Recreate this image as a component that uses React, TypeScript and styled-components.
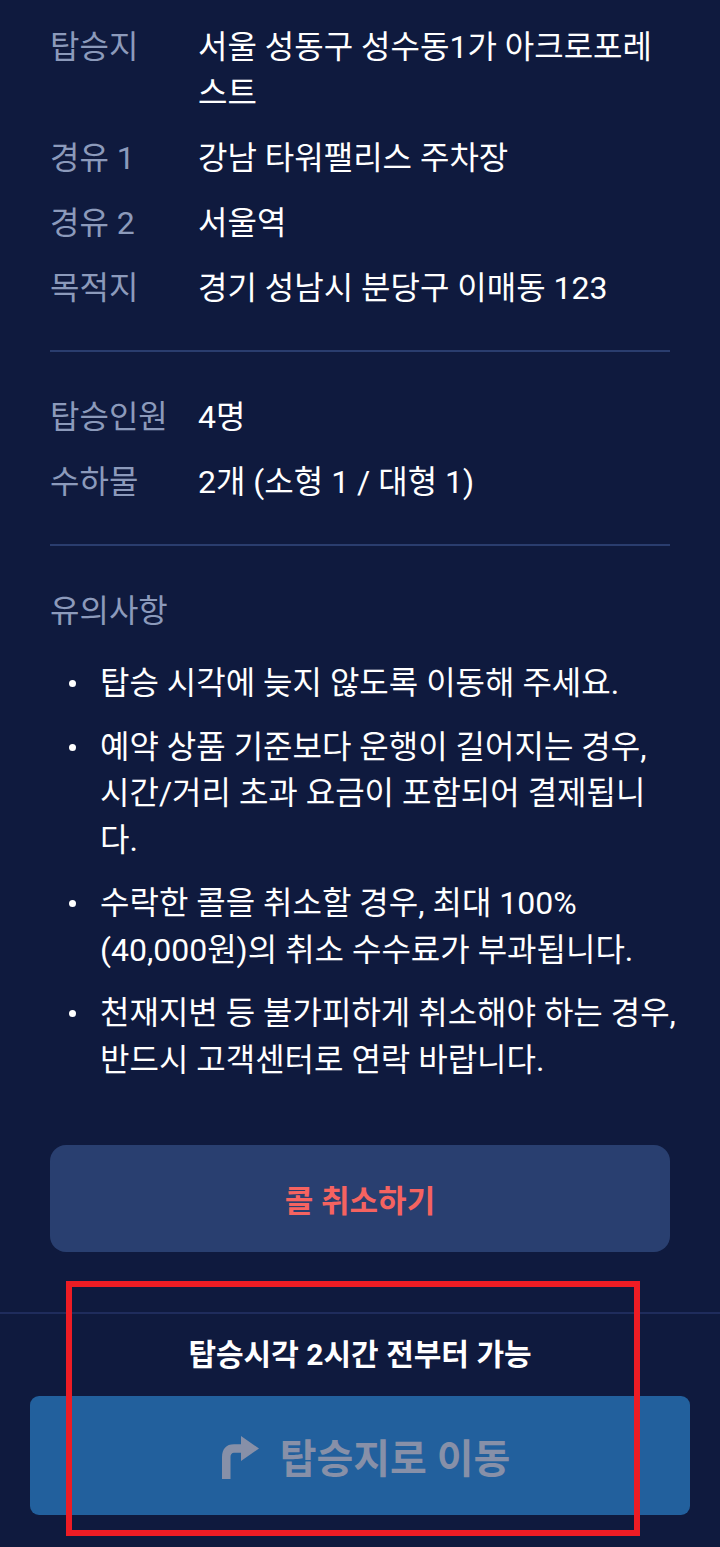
import React from "react"
import styled, { createGlobalStyle } from "styled-components"

const GlobalStyle = createGlobalStyle`
  html, body {
    margin: 0;
    padding: 0;
    background: #0f1a3e;
  }
  body {
    font-family: "Roboto", "Noto Sans CJK KR", sans-serif;
  }
  * { box-sizing: border-box; }
`

interface InfoItem {
  label: string
  value: string
}

const routeInfo: InfoItem[] = [
  { label: "탑승지", value: "서울 성동구 성수동1가 아크로포레스트" },
  { label: "경유 1", value: "강남 타워팰리스 주차장" },
  { label: "경유 2", value: "서울역" },
  { label: "목적지", value: "경기 성남시 분당구 이매동 123" },
]

const rideInfo: InfoItem[] = [
  { label: "탑승인원", value: "4명" },
  { label: "수하물", value: "2개 (소형 1 / 대형 1)" },
]

const notices = [
  "탑승 시각에 늦지 않도록 이동해 주세요.",
  "예약 상품 기준보다 운행이 길어지는 경우, 시간/거리 초과 요금이 포함되어 결제됩니다.",
  "수락한 콜을 취소할 경우, 최대 100% (40,000원)의 취소 수수료가 부과됩니다.",
  "천재지변 등 불가피하게 취소해야 하는 경우, 반드시 고객센터로 연락 바랍니다.",
]

export default function App() {
  return (
    <>
      <GlobalStyle />
      <Page>
        <Content>
          <InfoList>
            {routeInfo.map((item) => (
              <InfoRow key={item.label}>
                <Label>{item.label}</Label>
                <Value>{item.value}</Value>
              </InfoRow>
            ))}
          </InfoList>
          <Divider />
          <InfoList>
            {rideInfo.map((item) => (
              <InfoRow key={item.label}>
                <Label>{item.label}</Label>
                <Value>{item.value}</Value>
              </InfoRow>
            ))}
          </InfoList>
          <Divider />
          <NoticeTitle>유의사항</NoticeTitle>
          <NoticeList>
            {notices.map((n) => (
              <NoticeItem key={n}>{n}</NoticeItem>
            ))}
          </NoticeList>
          <CancelButton>콜 취소하기</CancelButton>
        </Content>
        <Footer>
          <FooterNote>탑승시각 2시간 전부터 가능</FooterNote>
          <GoButton disabled>
            <TurnIcon viewBox="0 0 37 44">
              <path d="M0 44 V22 C0 14 4 9.25 12 9.25 H19 V1 L37 13.5 L19 26 V17.75 H12 C9.8 17.75 8.5 19.5 8.5 22 V44 Z" />
            </TurnIcon>
            탑승지로 이동
          </GoButton>
          <Highlight />
        </Footer>
      </Page>
    </>
  )
}

const Page = styled.div`
  width: 720px;
  min-height: 1547px;
  background: #0f1a3e;
  display: flex;
  flex-direction: column;
`

const Content = styled.div`
  padding: 24px 50px 0;
  display: flex;
  flex-direction: column;
`

const InfoList = styled.div`
  display: flex;
  flex-direction: column;
  gap: 19px;
`

const InfoRow = styled.div`
  display: flex;
  font-size: 32px;
  line-height: 46px;
`

const Label = styled.div`
  width: 148px;
  flex-shrink: 0;
  color: #8c9abb;
`

const Value = styled.div`
  flex: 1;
  color: #ffffff;
`

const Divider = styled.hr`
  border: none;
  height: 2px;
  background: #2a3d6e;
  margin: 39px 0 42px;
`

const NoticeTitle = styled.div`
  font-size: 32px;
  line-height: 46px;
  color: #8c9abb;
`

const NoticeList = styled.ul`
  list-style: none;
  margin: 26px -12px 0 0;
  padding: 0;
  display: flex;
  flex-direction: column;
  gap: 17px;
`

const NoticeItem = styled.li`
  position: relative;
  padding-left: 50px;
  font-size: 32px;
  line-height: 46.5px;
  color: #ffffff;

  &::before {
    content: "";
    position: absolute;
    left: 19px;
    top: 20px;
    width: 7px;
    height: 7px;
    border-radius: 50%;
    background: #ffffff;
  }
`

const CancelButton = styled.button`
  margin-top: 62px;
  height: 107px;
  width: 100%;
  border: none;
  border-radius: 16px;
  background: #293f70;
  color: #f56360;
  font-family: inherit;
  font-size: 31px;
  font-weight: 700;
`

const Footer = styled.div`
  position: relative;
  margin-top: 60px;
  border-top: 2px solid #1f2c5c;
  padding: 22px 30px 31px;
  display: flex;
  flex-direction: column;
  align-items: center;
  gap: 22px;
`

const FooterNote = styled.div`
  font-size: 30px;
  line-height: 38px;
  font-weight: 700;
  color: #ffffff;
`

const GoButton = styled.button`
  width: 100%;
  height: 119px;
  border: none;
  border-radius: 9px;
  background: #22609d;
  color: #8790a8;
  font-family: inherit;
  font-size: 40px;
  font-weight: 700;
  display: flex;
  align-items: center;
  justify-content: center;
  gap: 21px;
  padding-left: 18px;
`

const TurnIcon = styled.svg`
  width: 37px;
  height: 44px;
  fill: #8790a8;
  margin-top: 2px;
`

const Highlight = styled.div`
  position: absolute;
  left: 66px;
  top: -33px;
  width: 574px;
  height: 255px;
  border: 6px solid #ed1c24;
  pointer-events: none;
`
